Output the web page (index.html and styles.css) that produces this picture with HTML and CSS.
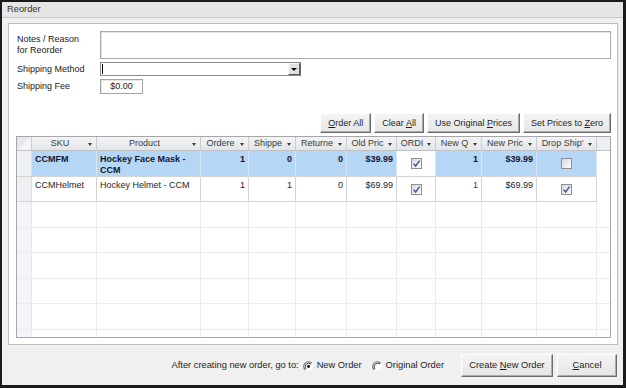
FILE: index.html
```html
<!DOCTYPE html>
<html lang="en">
<head>
  <meta charset="UTF-8">
  <title>Reorder</title>
  <link rel="stylesheet" href="styles.css">
</head>
<body>
  <div class="window">
    <div class="titlebar">Reorder</div>

    <div class="group">
      <div class="form">
        <label class="lbl lbl-notes">Notes / Reason<br>for Reorder</label>
        <textarea class="notes"></textarea>

        <label class="lbl">Shipping Method</label>
        <div class="select">
          <span class="caret"></span>
          <span class="dd-btn"><i class="tri"></i></span>
        </div>

        <label class="lbl">Shipping Fee</label>
        <div class="fee">$0.00</div>
      </div>

      <div class="actions">
        <button class="btn"><u>O</u>rder All</button>
        <button class="btn">Clear <u>A</u>ll</button>
        <button class="btn">Use Original <u>P</u>rices</button>
        <button class="btn">Set Prices to <u>Z</u>ero</button>
      </div>

      <div class="grid">
        <table>
          <colgroup>
            <col style="width:15px">
            <col style="width:65px">
            <col style="width:104px">
            <col style="width:48px">
            <col style="width:47px">
            <col style="width:51px">
            <col style="width:50px">
            <col style="width:39px">
            <col style="width:46px">
            <col style="width:55px">
            <col style="width:60px">
            <col>
          </colgroup>
          <thead>
            <tr>
              <th class="corner"></th>
              <th><div class="h"><span class="t">SKU</span><i class="arr"></i></div></th>
              <th><div class="h"><span class="t">Product</span><i class="arr"></i></div></th>
              <th><div class="h"><span class="t">Ordere</span><i class="arr"></i></div></th>
              <th><div class="h"><span class="t">Shippe</span><i class="arr"></i></div></th>
              <th><div class="h"><span class="t">Returne</span><i class="arr"></i></div></th>
              <th><div class="h"><span class="t">Old Pric</span><i class="arr"></i></div></th>
              <th><div class="h"><span class="t">ORDI</span><i class="arr"></i></div></th>
              <th><div class="h"><span class="t">New Q</span><i class="arr"></i></div></th>
              <th><div class="h"><span class="t">New Pric</span><i class="arr"></i></div></th>
              <th><div class="h"><span class="t">Drop Ship'</span><i class="arr"></i></div></th>
              <th class="filler"></th>
            </tr>
          </thead>
          <tbody>
            <tr class="row selected">
              <td class="sel"></td>
              <td>CCMFM</td>
              <td class="wrap">Hockey Face Mask - CCM</td>
              <td class="num">1</td>
              <td class="num">0</td>
              <td class="num">0</td>
              <td class="num">$39.99</td>
              <td class="check plain"><span class="cb"><svg viewBox="0 0 9 9"><path d="M1.6 4.6 L3.6 7 L7.6 1.6"/></svg></span></td>
              <td class="num">1</td>
              <td class="num">$39.99</td>
              <td class="check"><span class="cb"></span></td>
              <td class="filler"></td>
            </tr>
            <tr class="row">
              <td class="sel"></td>
              <td>CCMHelmet</td>
              <td class="wrap">Hockey Helmet - CCM</td>
              <td class="num">1</td>
              <td class="num">1</td>
              <td class="num">0</td>
              <td class="num">$69.99</td>
              <td class="check"><span class="cb"><svg viewBox="0 0 9 9"><path d="M1.6 4.6 L3.6 7 L7.6 1.6"/></svg></span></td>
              <td class="num qty">1</td>
              <td class="num">$69.99</td>
              <td class="check"><span class="cb"><svg viewBox="0 0 9 9"><path d="M1.6 4.6 L3.6 7 L7.6 1.6"/></svg></span></td>
              <td class="filler"></td>
            </tr>
            <tr class="empty"><td class="sel"></td><td></td><td></td><td></td><td></td><td></td><td></td><td></td><td></td><td></td><td></td><td class="filler"></td></tr>
            <tr class="empty"><td class="sel"></td><td></td><td></td><td></td><td></td><td></td><td></td><td></td><td></td><td></td><td></td><td class="filler"></td></tr>
            <tr class="empty"><td class="sel"></td><td></td><td></td><td></td><td></td><td></td><td></td><td></td><td></td><td></td><td></td><td class="filler"></td></tr>
            <tr class="empty"><td class="sel"></td><td></td><td></td><td></td><td></td><td></td><td></td><td></td><td></td><td></td><td></td><td class="filler"></td></tr>
            <tr class="empty"><td class="sel"></td><td></td><td></td><td></td><td></td><td></td><td></td><td></td><td></td><td></td><td></td><td class="filler"></td></tr>
            <tr class="empty"><td class="sel"></td><td></td><td></td><td></td><td></td><td></td><td></td><td></td><td></td><td></td><td></td><td class="filler"></td></tr>
          </tbody>
        </table>
      </div>
    </div>

    <div class="footer">
      <span class="goto">After creating new order, go to:</span>
      <label class="radio">
        <svg viewBox="0 0 12 12"><circle cx="6" cy="6" r="5" fill="#fff"/><path d="M2.3 9.7 A5 5 0 0 1 9.7 2.3" stroke="#6a6a6a" stroke-width="1.1" fill="none"/><path d="M3.2 8.8 A4 4 0 0 1 8.8 3.2" stroke="#2a2a2a" stroke-width="1" fill="none"/><circle cx="6" cy="6" r="1.6" fill="#111"/></svg>
        New Order
      </label>
      <label class="radio">
        <svg viewBox="0 0 12 12"><circle cx="6" cy="6" r="5" fill="#fff"/><path d="M2.3 9.7 A5 5 0 0 1 9.7 2.3" stroke="#6a6a6a" stroke-width="1.1" fill="none"/><path d="M3.2 8.8 A4 4 0 0 1 8.8 3.2" stroke="#2a2a2a" stroke-width="1" fill="none"/></svg>
        Original Order
      </label>
      <button class="btn btn-lg create">Create <u>N</u>ew Order</button>
      <button class="btn btn-lg cancel"><u>C</u>ancel</button>
    </div>
  </div>
</body>
</html>
```

FILE: styles.css
```css
body {
  margin: 0;
  padding: 0;
  font-family: "Liberation Sans", Arial, sans-serif;
  font-size: 9px;
  color: #222;
  background-color: #ffffff;
}

.window {
  width: 626px;
  height: 388px;
  box-sizing: border-box;
  border-style: solid;
  border-color: #1b1b1b;
  border-width: 2px 3px 3px 2px;
  background-color: #f0f0f0;
  display: flex;
  flex-direction: column;
}

.titlebar {
  height: 15px;
  line-height: 15px;
  padding-left: 5px;
  font-size: 9.3px;
  color: #333;
  background-color: #e6e6e6;
  border-bottom: 1px solid #c6c6c6;
}

/* group box */
.group {
  margin: 5px 5px 0 6px;
  height: 322px;
  box-sizing: border-box;
  border: 1px solid #bdbdbd;
  background-color: #ffffff;
  flex: none;
}

.form {
  display: grid;
  grid-template-columns: 83px 1fr;
  row-gap: 3px;
  padding: 7px 6px 0 8px;
}

.lbl {
  line-height: 14px;
  color: #222;
}

.lbl-notes {
  line-height: 11px;
  padding-top: 3px;
}

.notes {
  display: block;
  margin: 0;
  padding: 0;
  height: 28px;
  box-sizing: border-box;
  resize: none;
  border: 1px solid #a9a9a9;
  box-shadow: inset 1px 1px #e4e4e4;
  font: inherit;
}

.select {
  width: 201px;
  height: 14px;
  box-sizing: border-box;
  border: 1px solid #8c8c8c;
  border-right-color: #6a6a6a;
  display: flex;
  align-items: stretch;
  justify-content: space-between;
  background-color: #fff;
}

.caret {
  width: 1px;
  margin: 1px 0 1px 1px;
  background-color: #000;
}

.dd-btn {
  width: 12px;
  box-sizing: border-box;
  border: 1px solid;
  border-color: #f8f8f8 #5a5a5a #5a5a5a #f8f8f8;
  background-color: #e2e2e2;
  display: flex;
  align-items: flex-end;
  justify-content: center;
  padding-bottom: 3px;
}

.tri {
  width: 0;
  height: 0;
  border-left: 3px solid transparent;
  border-right: 3px solid transparent;
  border-top: 3px solid #000;
}

.fee {
  width: 43px;
  height: 15px;
  box-sizing: border-box;
  border: 1px solid #a3a3a3;
  box-shadow: inset 1px 1px #e6e6e6;
  line-height: 13px;
  text-align: center;
}

/* buttons */
.btn {
  font-family: inherit;
  font-size: 9px;
  color: #1e1e1e;
  height: 20px;
  padding: 0 7px;
  margin: 0;
  box-sizing: border-box;
  background: linear-gradient(#f4f4f4, #e6e6e6);
  border: 1px solid;
  border-color: #ffffff #6b6b6b #6b6b6b #ffffff;
  box-shadow: inset -1px -1px #acacac;
}

.btn u {
  text-underline-offset: 1px;
}

.actions {
  display: flex;
  justify-content: flex-end;
  gap: 3px;
  margin-top: 19px;
  padding-right: 6px;
}

/* data grid */
.grid {
  margin: 3px 6px 0 7px;
  height: 202px;
  box-sizing: border-box;
  border: 1px solid #a6a6a6;
  overflow: hidden;
  background-color: #fff;
}

.grid table {
  width: 100%;
  table-layout: fixed;
  border-collapse: separate;
  border-spacing: 0;
}

.grid th,
.grid td {
  box-sizing: border-box;
  padding: 0 3px;
  overflow: hidden;
  white-space: nowrap;
  border-right: 1px solid #d3d3d3;
  border-bottom: 1px solid #d3d3d3;
}

.grid th {
  height: 14px;
  font-weight: normal;
  color: #3a3a3a;
  background: linear-gradient(#f3f4f6, #e2e4e7);
  border-right-color: #c9ccd0;
  border-bottom-color: #bfc3c8;
  padding: 0 4px 0 3px;
}

.grid th.corner {
  background: linear-gradient(135deg, #e6e8eb 50%, #f3f4f6 50%);
}

.grid th.filler {
  background: #eceef1;
  border-right: none;
}

.h {
  display: flex;
  align-items: center;
  line-height: 13px;
}

.h .t {
  flex: 1;
  min-width: 0;
  overflow: hidden;
  text-align: center;
  white-space: nowrap;
}

.arr {
  flex: none;
  margin: 2px 0 0 3px;
  width: 0;
  height: 0;
  border-left: 2.5px solid transparent;
  border-right: 2.5px solid transparent;
  border-top: 3px solid #3c3c3c;
}

.row td {
  vertical-align: top;
  padding-top: 3px;
  line-height: 11px;
  color: #262626;
  height: 25px;
}

.row.selected td {
  background-color: #b6d6f6;
  font-weight: bold;
  color: #15152a;
  height: 26px;
  border-right-color: #d7e6f4;
}

.row td.wrap {
  white-space: normal;
}

.row td.num {
  text-align: right;
}

.row td.qty {
  color: #4a2a6e;
}

.row td.check {
  text-align: center;
  vertical-align: middle;
  padding-top: 0;
}

.row td.plain {
  background-color: #fff;
}

.grid td.sel,
.row.selected td.sel {
  background-color: #eff0f4;
  border-right-color: #dcdde3;
}

.row.selected td.filler,
.grid td.filler {
  background-color: #fff;
  border-right: none;
}

.row td.filler {
  border-bottom: none;
}

.empty td {
  height: 25.5px;
  border-right-color: #ececec;
  border-bottom-color: #ececec;
}

.empty td.sel {
  background-color: #f4f4fc;
  border-right-color: #e6e6f0;
}

.empty td.filler {
  border-bottom: 1px solid #ececec;
}

.cb {
  display: inline-block;
  width: 11px;
  height: 11px;
  box-sizing: border-box;
  border: 1px solid #8e8f92;
  background: linear-gradient(135deg, #d9dadc, #fbfbfb);
  vertical-align: middle;
}

.cb svg {
  display: block;
  width: 9px;
  height: 9px;
}

.cb path {
  fill: none;
  stroke: #3f5590;
  stroke-width: 1.4;
}

/* footer */
.footer {
  flex: 1;
  display: flex;
  align-items: center;
  justify-content: flex-end;
  padding-right: 6px;
  font-size: 9.3px;
  color: #1e1e1e;
}

.goto {
  margin-right: 4px;
}

.radio {
  display: flex;
  align-items: center;
  gap: 3px;
  margin-right: 10px;
}

.radio:last-of-type {
  margin-right: 0;
}

.radio svg {
  width: 11px;
  height: 11px;
  margin-top: 2px;
}

.btn-lg {
  height: 23px;
  font-size: 9.3px;
}

.create {
  margin-left: 17px;
  width: 92px;
}

.cancel {
  margin-left: 4px;
  width: 60px;
}
```
